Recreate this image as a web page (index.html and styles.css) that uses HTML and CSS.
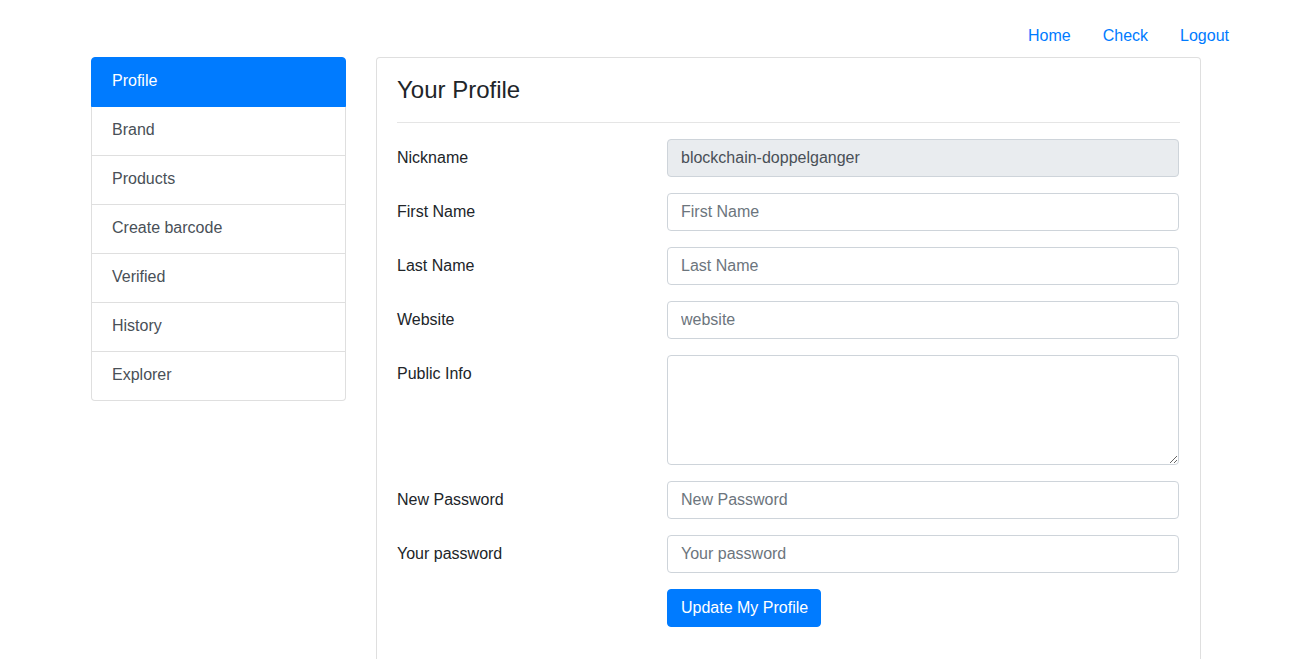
FILE: index.html
```html
<!DOCTYPE html>
<html lang="en">
<head>
<meta charset="utf-8">
<title>Your Profile</title>
<link rel="stylesheet" href="styles.css">
</head>
<body>
<header class="topnav">
  <ul class="nav-links">
    <li><a href="#">Home</a></li>
    <li><a href="#">Check</a></li>
    <li><a href="#">Logout</a></li>
  </ul>
</header>
<main class="container">
  <aside class="sidebar">
    <div class="list-group">
      <a href="#" class="list-item active">Profile</a>
      <a href="#" class="list-item">Brand</a>
      <a href="#" class="list-item">Products</a>
      <a href="#" class="list-item">Create barcode</a>
      <a href="#" class="list-item">Verified</a>
      <a href="#" class="list-item">History</a>
      <a href="#" class="list-item">Explorer</a>
    </div>
  </aside>
  <section class="card">
    <div class="card-body">
      <h4 class="card-title">Your Profile</h4>
      <hr class="divider">
      <form class="profile-form">
        <div class="form-row">
          <label class="form-label">Nickname</label>
          <input class="form-control" type="text" value="blockchain-doppelganger" readonly>
        </div>
        <div class="form-row">
          <label class="form-label">First Name</label>
          <input class="form-control" type="text" placeholder="First Name">
        </div>
        <div class="form-row">
          <label class="form-label">Last Name</label>
          <input class="form-control" type="text" placeholder="Last Name">
        </div>
        <div class="form-row">
          <label class="form-label">Website</label>
          <input class="form-control" type="text" placeholder="website">
        </div>
        <div class="form-row">
          <label class="form-label">Public Info</label>
          <textarea class="form-control textarea" rows="4"></textarea>
        </div>
        <div class="form-row">
          <label class="form-label">New Password</label>
          <input class="form-control" type="password" placeholder="New Password">
        </div>
        <div class="form-row">
          <label class="form-label">Your password</label>
          <input class="form-control" type="password" placeholder="Your password">
        </div>
        <div class="form-row">
          <span class="form-label"></span>
          <div class="actions">
            <button type="button" class="btn-primary">Update My Profile</button>
          </div>
        </div>
      </form>
    </div>
  </section>
</main>
</body>
</html>
```
FILE: styles.css
```css
* { box-sizing: border-box; }

html, body {
  margin: 0;
  padding: 0;
  background: #fff;
  color: #212529;
  font-family: "Liberation Sans", Arial, sans-serif;
  font-size: 16px;
  line-height: 1.5;
}

a { text-decoration: none; }

.topnav {
  display: flex;
  justify-content: flex-end;
  padding: 16px 45px 0 0;
  height: 56px;
}

.nav-links {
  display: flex;
  list-style: none;
  margin: 0;
  padding: 0;
}

.nav-links a {
  display: block;
  padding: 8px 16px;
  line-height: 24px;
  color: #007bff;
}

.container {
  width: 1140px;
  margin: 1px auto 0;
  padding: 0 14px 0 16px;
  display: flex;
  gap: 30px;
  align-items: flex-start;
}

.sidebar {
  width: 255px;
  flex: none;
}

.list-group {
  display: flex;
  flex-direction: column;
  border-radius: 4px;
}

.list-item {
  display: block;
  padding: 11px 20px 13px;
  line-height: 24px;
  color: #495057;
  background: #fff;
  border: 1px solid rgba(0, 0, 0, 0.125);
  margin-bottom: -1px;
}

.list-item:first-child {
  border-top-left-radius: 4px;
  border-top-right-radius: 4px;
}

.list-item:last-child {
  margin-bottom: 0;
  border-bottom-left-radius: 4px;
  border-bottom-right-radius: 4px;
}

.list-item.active {
  background: #007bff;
  border-color: #007bff;
  color: #fff;
  position: relative;
  z-index: 1;
}

.card {
  flex: 1;
  border: 1px solid rgba(0, 0, 0, 0.125);
  border-radius: 4px;
  background: #fff;
  min-height: 640px;
}

.card-body {
  padding: 20px;
}

.card-title {
  margin: 0;
  font-size: 24px;
  font-weight: 500;
  line-height: 24px;
  color: #212529;
}

.divider {
  margin: 20px 0 16px;
  border: 0;
  border-top: 1px solid rgba(0, 0, 0, 0.1);
  height: 0;
}

.profile-form {
  display: flex;
  flex-direction: column;
  gap: 16px;
}

.form-row {
  display: grid;
  grid-template-columns: 240px 512px;
  column-gap: 30px;
  align-items: start;
}

.form-label {
  padding-top: 7px;
  padding-bottom: 7px;
  line-height: 24px;
  color: #212529;
}

.form-control {
  display: block;
  width: 100%;
  height: 38px;
  padding: 6px 12px 6px 13px;
  font-family: inherit;
  font-size: 16px;
  line-height: 24px;
  color: #495057;
  background: #fff;
  border: 1px solid #ced4da;
  border-radius: 4px;
  margin: 0;
}

.form-control::placeholder {
  color: #6c757d;
  opacity: 1;
}

.form-control[readonly] {
  background: #e9ecef;
}

.textarea {
  height: 110px;
  resize: vertical;
}

.btn-primary {
  display: inline-block;
  padding: 6px 12px 6px 13px;
  font-family: inherit;
  font-size: 16px;
  line-height: 24px;
  color: #fff;
  background: #007bff;
  border: 1px solid #007bff;
  border-radius: 4px;
  cursor: pointer;
}
```
